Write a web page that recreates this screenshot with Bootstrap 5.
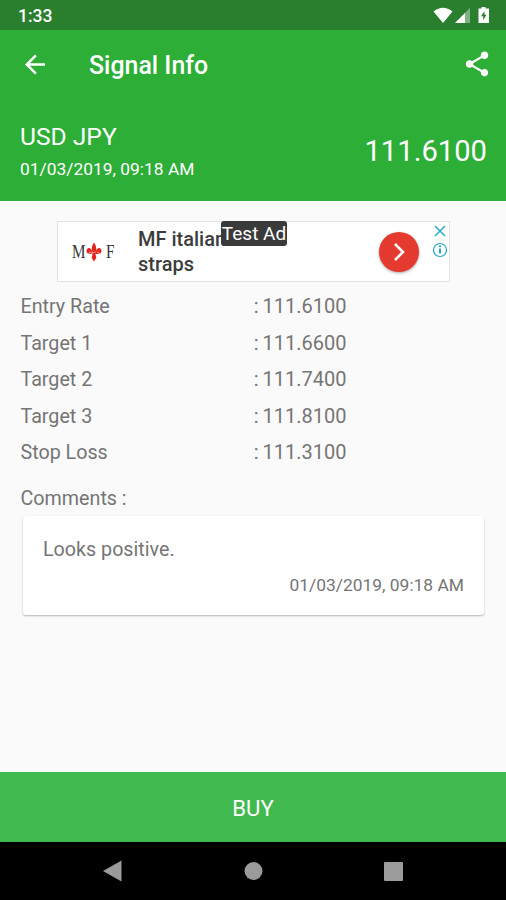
<!DOCTYPE html>
<html lang="en">
<head>
<meta charset="utf-8">
<meta name="viewport" content="width=device-width, initial-scale=1">
<title>Signal Info</title>
<link href="https://cdn.jsdelivr.net/npm/bootstrap@5.3.0/dist/css/bootstrap.min.css" rel="stylesheet">
<style>
body{font-family:Roboto,"Liberation Sans",sans-serif;background:#fafafa;color:#757575;height:900px;overflow:hidden;line-height:1.2}
svg{display:block;flex:none;overflow:visible}
.status-bar{height:30px;background:#297f2e;font-size:17.5px;font-weight:500;padding:2px 16px 0 18px}
.app-bar{height:70px;background:#2cae37;padding:0 14px 0 20px}
.app-title{font-size:24.9px;font-weight:500;margin-left:39px;padding-top:2px}
.quote{height:101px;background:#2cae37;padding:2px 19px 0 20px}
.pair{font-size:24.6px;line-height:30px}
.pair-date{font-size:17.4px;line-height:22px;margin-top:6px;padding-bottom:1px}
.price{font-size:29.2px}
.ad{width:393px;height:61px;margin:20px 0 0 57px;background:#fff;border:1px solid #e2e2e2}
.ad-logo{font:19px/20px "Liberation Serif",serif;color:#333;width:80px;padding-left:14px}
.ad-logo span{display:inline-block;transform:scaleX(.8);width:14px;transform-origin:0 50%}
.ad-text{font-size:20px;line-height:25px;font-weight:500;color:#3c3c3c;width:151px}
.ad-tag{left:163px;top:-1px;width:66px;height:25px;background:#3a3a3a;border-radius:3px;font-size:19px;line-height:26px}
.ad-go{width:40px;height:40px;background:#e53a30;box-shadow:0 1px 3px rgba(0,0,0,.35);margin-left:90px}
.ad-choices{margin:0 1px 21px auto}
.info{padding:6px 20px 0 20.5px;font-size:19.7px}
.info .row{height:36.5px}
.field-name{padding-top:2px}
.rate{font-size:20px;word-spacing:-1px;margin-left:-11.5px}
.comments-label{font-size:19.7px;line-height:24px;padding:16px 20px 0 20.5px}
.note{margin:5px 22px 0 23px;height:99px;border-radius:3px;box-shadow:0 1px 2px rgba(0,0,0,.28);padding:22px 20px 0}
.note-text{font-size:19.7px;line-height:24px}
.note-date{font-size:17.4px;line-height:22px;margin-top:12px}
.buy{height:70px;background:#40b94f;font-size:22.2px;border-radius:0;padding:3px 0 0}
.nav-keys{height:58px;background:#000}
</style>
<script src="https://cdn.jsdelivr.net/npm/bootstrap@5.3.0/dist/js/bootstrap.bundle.min.js"></script>
</head>
<body class="d-flex flex-column">
<div class="status-bar d-flex align-items-center text-white">
  <span class="me-auto">1:33</span>
  <svg width="56" height="18" viewBox="0 0 56 18"><path d="M-.5 4.500Q9-3 18.500 4.500L9 16Z" fill="#fff"/><path d="M36 1V16H21Z" fill="#7fb182"/><path d="M31 6V16H21Z" fill="#fff"/><path d="M47.500 0h4v1.500H55V16H44.500V1.500h3Z" fill="#fff"/><path d="M50.500 4 47 9.300h2.200v4l3.300-5.600h-2Z" fill="#297f2e"/></svg>
</div>
<header class="app-bar d-flex align-items-center text-white">
  <svg width="30" height="30" viewBox="0 .4 24 24" fill="#fff"><path d="M20 11H7.830l5.590-5.590L12 4l-8 8 8 8 1.410-1.410L7.830 13H20v-2z"/></svg>
  <span class="app-title me-auto">Signal Info</span>
  <svg width="30" height="30" viewBox="0 .8 24 24" fill="#fff"><path d="M18 16.080c-.76 0-1.440.3-1.960.77L8.910 12.700c.05-.23.09-.46.09-.7s-.04-.47-.09-.7l7.050-4.110c.54.5 1.250.81 2.040.81 1.660 0 3-1.340 3-3s-1.340-3-3-3-3 1.340-3 3c0 .24.04.47.09.7L8.040 9.810C7.500 9.310 6.790 9 6 9c-1.660 0-3 1.340-3 3s1.340 3 3 3c.79 0 1.500-.31 2.040-.81l7.120 4.160c-.05.21-.08.43-.08.65 0 1.610 1.310 2.920 2.920 2.920s2.920-1.310 2.920-2.920-1.310-2.920-2.920-2.920z"/></svg>
</header>
<section class="quote d-flex align-items-center text-white">
  <div class="me-auto"><div class="pair">USD JPY</div><div class="pair-date">01/03/2019, 09:18 AM</div></div>
  <div class="price">111.6100</div>
</section>
<main class="flex-grow-1">
  <div class="ad position-relative d-flex align-items-center">
    <div class="ad-logo d-flex align-items-center">
      <span>M</span>
      <svg width="16" height="20" viewBox="0 0 17 20" fill="#e3261c"><path d="M8.500 0Q12.500 5 10 10H7Q4.500 5 8.500 0ZM7 11C6 5 1 4 .5 9c0 3 3 3.500 3 1 1-.5 2 0 2.500 2zM10 11c1-6 6-7 6.500-2 0 3-3 3.500-3 1-1-.5-2 0-2.500 2zM3.500 10.500h10V12h-10zM7 12h3l1 4-2.500 4L6 16z"/></svg>
      <span class="ms-1">F</span>
    </div>
    <div class="ad-text">MF italian<br>straps</div>
    <div class="ad-go rounded-circle d-flex align-items-center justify-content-center"><svg width="12" height="20" viewBox="0 0 12 20" fill="none" stroke="#fff" stroke-width="2.500"><path d="M2 2l8 8-8 8"/></svg></div>
    <svg class="ad-choices" width="16" height="36" viewBox="0 0 16 36" fill="none" stroke="#25a9c9" stroke-width="1.500"><path d="M3 3l10 10M13 3L3 13"/><circle cx="8" cy="27" r="6.500" stroke-width="1.200"/><path d="M8 25.500v5M8 22.500v1.800" stroke-width="2"/></svg>
    <div class="ad-tag position-absolute text-white text-center">Test Ad</div>
  </div>
  <div class="info">
    <div class="row align-items-center"><div class="col-6 field-name">Entry Rate</div><div class="col-6"><div class="rate">: 111.6100</div></div></div>
    <div class="row align-items-center"><div class="col-6 field-name">Target 1</div><div class="col-6"><div class="rate">: 111.6600</div></div></div>
    <div class="row align-items-center"><div class="col-6 field-name">Target 2</div><div class="col-6"><div class="rate">: 111.7400</div></div></div>
    <div class="row align-items-center"><div class="col-6 field-name">Target 3</div><div class="col-6"><div class="rate">: 111.8100</div></div></div>
    <div class="row align-items-center"><div class="col-6 field-name">Stop Loss</div><div class="col-6"><div class="rate">: 111.3100</div></div></div>
  </div>
  <div class="comments-label">Comments :</div>
  <div class="note bg-white">
    <div class="note-text">Looks positive.</div>
    <div class="note-date text-end">01/03/2019, 09:18 AM</div>
  </div>
</main>
<button class="buy btn w-100 text-white border-0 flex-shrink-0" type="button">BUY</button>
<nav class="nav-keys d-flex flex-shrink-0 justify-content-center">
  <svg width="300" height="58" viewBox="0 0 300 58" fill="#9b9b9b"><path d="M0 29 18.500 18.500V39.500Z"/><circle cx="150.500" cy="29" r="9"/><rect x="281" y="20" width="19" height="19" rx="1"/></svg>
</nav>
</body>
</html>
